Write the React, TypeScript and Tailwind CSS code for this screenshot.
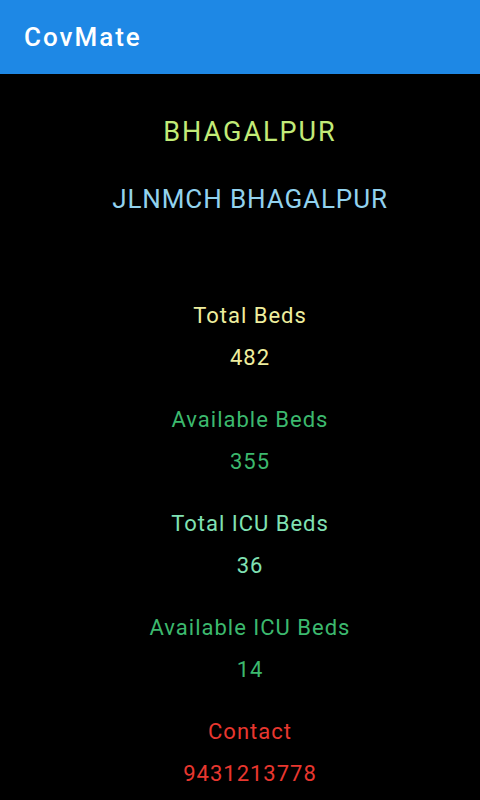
const rows = [
  { label: 'Total Beds', value: '482', color: 'text-[#EEEE9E]' },
  { label: 'Available Beds', value: '355', color: 'text-[#3CB96E]' },
  { label: 'Total ICU Beds', value: '36', color: 'text-[#80E2B4]' },
  { label: 'Available ICU Beds', value: '14', color: 'text-[#3CB96E]' },
  { label: 'Contact', value: '9431213778', color: 'text-[#E8372F]' },
];

export default function App() {
  return (
    <div className="w-[480px] h-[800px] bg-black overflow-hidden font-['Roboto',sans-serif]">
      <div className="h-[74px] bg-[#1E88E5] flex items-center pl-6 shadow-[0_2px_3px_rgba(0,0,0,0.4)]">
        <h1 className="text-white text-[26px] font-medium tracking-[2px]">CovMate</h1>
      </div>
      <div className="flex flex-col items-center pl-5 pt-10">
        <p className="text-[27px] leading-[36px] tracking-[2px] text-[#C2EB78]">BHAGALPUR</p>
        <p className="mt-[31px] text-[26px] leading-[36px] tracking-[0.9px] text-[#92D2EE]">JLNMCH BHAGALPUR</p>
        <div className="mt-[84px] flex flex-col items-center">
          {rows.map((row, i) => (
            <div key={row.label} className={`flex flex-col items-center tracking-[1px] ${row.color} ${i > 0 ? 'mt-[32px]' : ''}`}>
              <p className="text-[22px] leading-[30px]">{row.label}</p>
              <p className="mt-3 text-[22px] leading-[30px]">{row.value}</p>
            </div>
          ))}
        </div>
      </div>
    </div>
  );
}
